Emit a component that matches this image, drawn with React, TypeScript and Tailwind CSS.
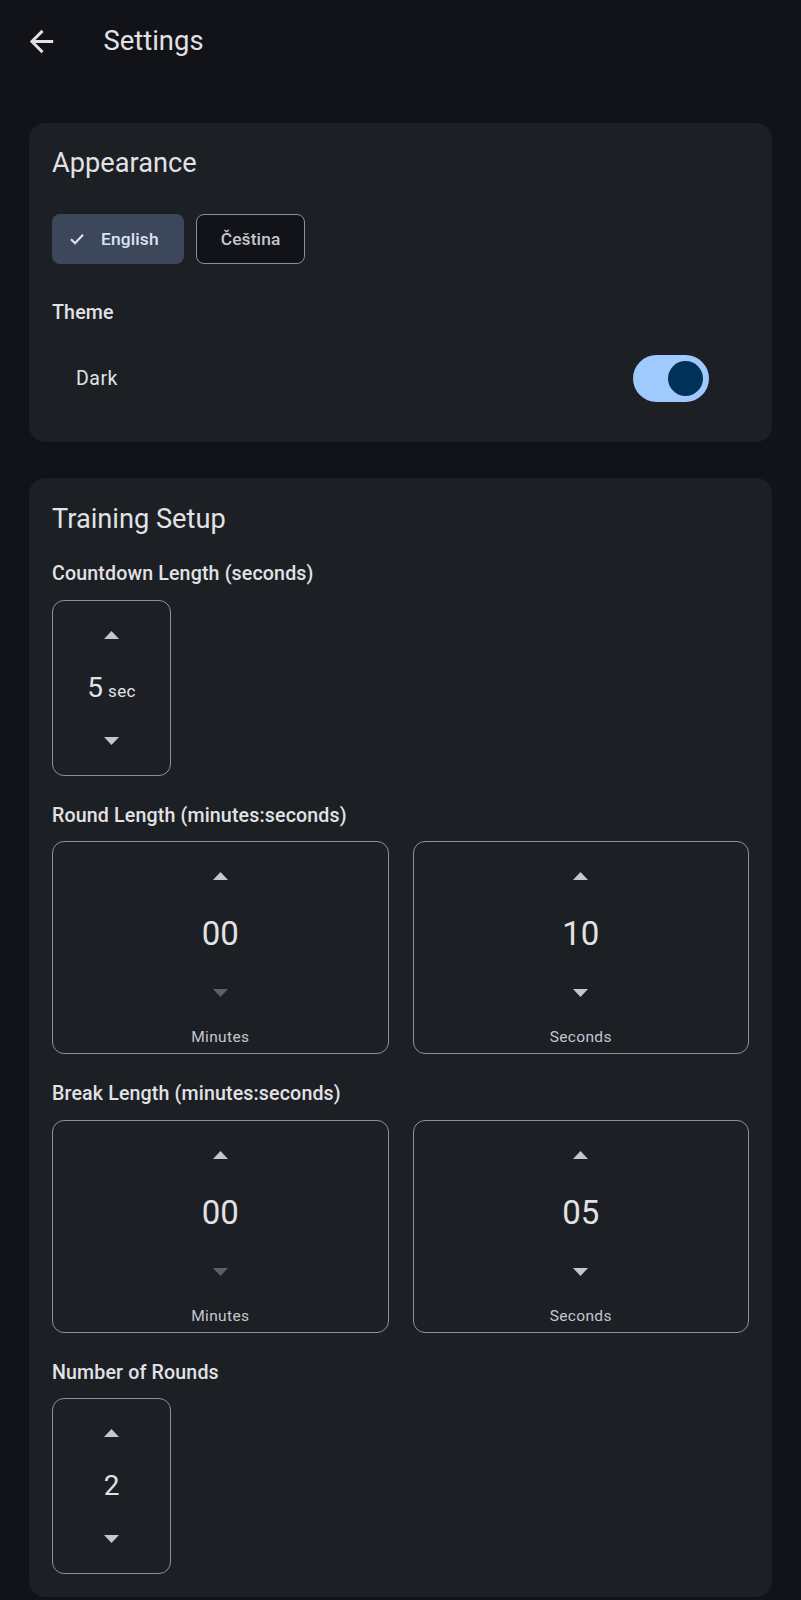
import React from "react";

const font = { fontFamily: "Roboto, 'Noto Sans', sans-serif" };

const Triangle = ({ dir, disabled }: { dir: "up" | "down"; disabled?: boolean }) => (
  <svg width="15" height="8" viewBox="0 0 15 8" className="block">
    <polygon
      points={dir === "up" ? "0,8 15,8 7.5,0" : "0,0 15,0 7.5,8"}
      fill={disabled ? "#5d6066" : "#c4c6d0"}
    />
  </svg>
);

const SmallStepper = ({ value, unit }: { value: string; unit?: string }) => (
  <div className="mt-[13.5px] flex h-[176px] w-[119px] flex-col items-center rounded-[12px] border-[1.5px] border-[#8e9099] pt-[30px]">
    <Triangle dir="up" />
    <div className="mt-[31px] flex h-[36px] items-baseline gap-[5px] leading-[36px] text-[#e2e2e6]">
      <span className="text-[28px]">{value}</span>
      {unit && <span className="text-[17px] tracking-[0.3px]">{unit}</span>}
    </div>
    <div className="mt-[31px]">
      <Triangle dir="down" />
    </div>
  </div>
);

const TimeStepper = ({
  value,
  label,
  downDisabled,
}: {
  value: string;
  label: string;
  downDisabled?: boolean;
}) => (
  <div className="flex h-[213px] flex-col items-center rounded-[12px] border-[1.5px] border-[#8e9099] pt-[30px]">
    <Triangle dir="up" />
    <div className="mt-[34px] h-[40px] text-[33px] leading-[40px] text-[#e2e2e6]">{value}</div>
    <div className="mt-[35px]">
      <Triangle dir="down" disabled={downDisabled} />
    </div>
    <div className="mt-[30px] h-[20px] text-[15.5px] leading-[20px] tracking-[0.35px] text-[#c4c6d0]">
      {label}
    </div>
  </div>
);

const Label = ({ children, first }: { children: React.ReactNode; first?: boolean }) => (
  <p
    className={
      (first ? "mt-[27px] " : "mt-[28px] ") +
      "h-[24px] text-[19.6px] font-medium leading-[24px] tracking-[0.15px] text-[#e2e2e6]"
    }
  >
    {children}
  </p>
);

export default function App() {
  return (
    <div className="min-h-screen w-full bg-[#111318] pb-[2px]" style={font}>
      {/* header */}
      <div className="flex h-[82px] items-center">
        <svg width="35" height="35" viewBox="0 0 24 24" className="ml-[23.5px]">
          <path
            d="M20 11H7.83l5.59-5.59L12 4l-8 8 8 8 1.41-1.41L7.83 13H20v-2z"
            fill="#e2e2e6"
          />
        </svg>
        <h1 className="ml-[45px] text-[27.4px] leading-[32px] text-[#e2e2e6]">Settings</h1>
      </div>

      {/* appearance */}
      <section className="mx-[29px] mt-[41px] rounded-[16px] bg-[#1c1f23] px-[23px] pb-[40px] pt-[24px]">
        <h2 className="h-[32px] text-[27.2px] leading-[32px] text-[#e2e2e6]">Appearance</h2>
        <div className="mt-[35px] flex gap-[12px]">
          <button className="flex h-[50px] items-center rounded-[8px] bg-[#3c4759] pl-[18px] pr-[25px] text-[17.4px] font-medium tracking-[0.12px] text-[#dae2f9]">
            <svg width="14" height="12" viewBox="0 0 14 12">
              <path d="M1 6.2l4 4L13 1.8" fill="none" stroke="#dae2f9" strokeWidth="2.2" />
            </svg>
            <span className="ml-[17px]">English</span>
          </button>
          <button className="flex h-[50px] items-center rounded-[8px] border-[1.5px] border-[#8e9099] bg-[#111318] px-[24px] text-[17.4px] font-medium tracking-[0.12px] text-[#c4c6d0]">
            Čeština
          </button>
        </div>
        <p className="mt-[37px] h-[24px] text-[19.6px] font-medium leading-[24px] tracking-[0.15px] text-[#e2e2e6]">
          Theme
        </p>
        <div className="mt-[30px] flex items-center justify-between pl-[24px] pr-[40px]">
          <span className="text-[19.5px] tracking-[0.5px] text-[#e2e2e6]">Dark</span>
          <div className="flex h-[47px] w-[76px] items-center justify-end rounded-full bg-[#a0cafd] pr-[6px]">
            <div className="h-[35px] w-[35px] rounded-full bg-[#003258]" />
          </div>
        </div>
      </section>

      {/* training setup */}
      <section className="mx-[29px] mt-[36px] rounded-[16px] bg-[#1c1f23] px-[23px] pb-[23px] pt-[25px]">
        <h2 className="h-[32px] text-[27.2px] leading-[32px] text-[#e2e2e6]">Training Setup</h2>

        <Label first>Countdown Length (seconds)</Label>
        <SmallStepper value="5" unit="sec" />

        <Label>Round Length (minutes:seconds)</Label>
        <div className="mt-[13.5px] grid grid-cols-2 gap-[24px]">
          <TimeStepper value="00" label="Minutes" downDisabled />
          <TimeStepper value="10" label="Seconds" />
        </div>

        <Label>Break Length (minutes:seconds)</Label>
        <div className="mt-[13.5px] grid grid-cols-2 gap-[24px]">
          <TimeStepper value="00" label="Minutes" downDisabled />
          <TimeStepper value="05" label="Seconds" />
        </div>

        <Label>Number of Rounds</Label>
        <SmallStepper value="2" />
      </section>
    </div>
  );
}
